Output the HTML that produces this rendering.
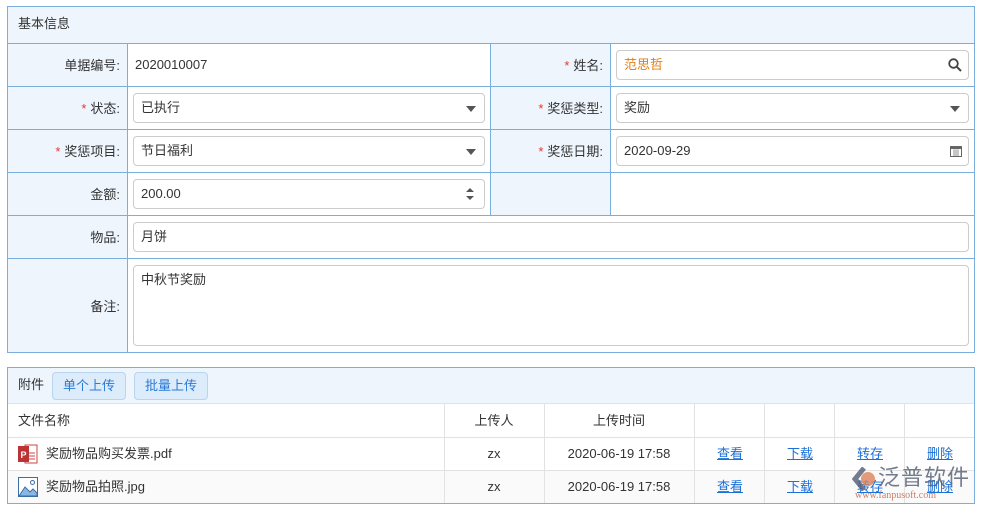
<!DOCTYPE html><html><head><meta charset="utf-8"><style>
body{margin:0;background:#fff;font-family:"Liberation Sans","Noto Sans CJK SC",sans-serif;font-size:13px;color:#333;}
.a{position:absolute;box-sizing:border-box;line-height:16px;}
.ln{position:absolute;background:#7aaedc;}
.lg{position:absolute;background:#e2e2e2;}
.lab{position:absolute;text-align:right;width:112px;line-height:16px;}
.st{color:#e33;margin-right:4px;}
.inp{position:absolute;box-sizing:border-box;border:1px solid #ccc;border-radius:4px;background:#fff;height:30px;padding:0 7px;line-height:28px;}
.tri{position:absolute;right:8px;top:12px;width:0;height:0;border-left:5px solid transparent;border-right:5px solid transparent;border-top:6px solid #555;}
a{color:#1a6fd8;text-decoration:underline;position:absolute;line-height:16px;}
</style></head><body>
<div class="a" style="left:7px;top:6px;width:968px;height:347px;border:1px solid #7aaedc;"></div>
<div class="a" style="left:8px;top:7px;width:966px;height:36px;background:#eef5fd;"></div>
<div class="a" style="left:8px;top:43px;width:119px;height:309px;background:#eef5fd;"></div>
<div class="a" style="left:491px;top:43px;width:119px;height:172px;background:#eef5fd;"></div>
<div class="a" style="left:18px;top:16px;">基本信息</div>
<div class="ln" style="left:7px;top:43px;width:968px;height:1px"></div>
<div class="ln" style="left:7px;top:86px;width:968px;height:1px"></div>
<div class="ln" style="left:7px;top:129px;width:968px;height:1px"></div>
<div class="ln" style="left:7px;top:172px;width:968px;height:1px"></div>
<div class="ln" style="left:7px;top:215px;width:968px;height:1px"></div>
<div class="ln" style="left:7px;top:258px;width:968px;height:1px"></div>
<div class="ln" style="left:127px;top:43px;width:1px;height:310px"></div>
<div class="ln" style="left:490px;top:43px;width:1px;height:172px"></div>
<div class="ln" style="left:610px;top:43px;width:1px;height:172px"></div>

<div class="lab" style="left:8px;top:58px;">单据编号:</div>
<div class="a" style="left:135px;top:57px;">2020010007</div>
<div class="lab" style="left:491px;top:58px;"><span class="st">*</span>姓名:</div>
<div class="inp" style="left:616px;top:50px;width:353px;color:#e0801a;">范思哲<svg style="position:absolute;right:6px;top:7px" width="14" height="14" viewBox="0 0 14 14"><circle cx="5.5" cy="5.5" r="4.3" fill="none" stroke="#444" stroke-width="1.8"/><path d="M8.7 8.7L13 13" stroke="#444" stroke-width="2"/></svg></div>

<div class="lab" style="left:8px;top:101px;"><span class="st">*</span>状态:</div>
<div class="inp" style="left:133px;top:93px;width:352px;">已执行<div class="tri"></div></div>
<div class="lab" style="left:491px;top:101px;"><span class="st">*</span>奖惩类型:</div>
<div class="inp" style="left:616px;top:93px;width:353px;">奖励<div class="tri"></div></div>

<div class="lab" style="left:8px;top:144px;"><span class="st">*</span>奖惩项目:</div>
<div class="inp" style="left:133px;top:136px;width:352px;">节日福利<div class="tri"></div></div>
<div class="lab" style="left:491px;top:144px;"><span class="st">*</span>奖惩日期:</div>
<div class="inp" style="left:616px;top:136px;width:353px;">2020-09-29<svg style="position:absolute;right:6px;top:8px" width="12" height="12" viewBox="0 0 12 12"><rect x="0.5" y="1.5" width="11" height="10" fill="none" stroke="#666"/><rect x="0.5" y="1.5" width="11" height="2.5" fill="#666"/><path d="M3 6h6M3 8h6M3 10h6M4 4v7M6 4v7M8 4v7" stroke="#888" stroke-width=".6"/></svg></div>

<div class="lab" style="left:8px;top:187px;">金额:</div>
<div class="inp" style="left:133px;top:179px;width:352px;">200.00<svg style="position:absolute;right:10px;top:7px" width="8" height="14" viewBox="0 0 8 14"><path d="M0 5L4 1L8 5Z M0 9L4 13L8 9Z" fill="#555"/></svg></div>

<div class="lab" style="left:8px;top:230px;">物品:</div>
<div class="inp" style="left:133px;top:222px;width:836px;">月饼</div>

<div class="lab" style="left:8px;top:299px;">备注:</div>
<div class="inp" style="left:133px;top:265px;width:836px;height:81px;line-height:28px;">中秋节奖励</div>

<div class="a" style="left:7px;top:367px;width:968px;height:137px;border:1px solid #7aaedc;"></div>
<div class="a" style="left:8px;top:368px;width:966px;height:36px;background:#eef5fd;border-bottom:1px solid #e2e2e2;"></div>
<div class="a" style="left:18px;top:377px;">附件</div>
<div class="a" style="left:52px;top:372px;width:74px;height:28px;border:1px solid #b8d4ee;border-radius:4px;background:#dcecfb;color:#2a7ad6;text-align:center;line-height:26px;">单个上传</div>
<div class="a" style="left:134px;top:372px;width:74px;height:28px;border:1px solid #b8d4ee;border-radius:4px;background:#dcecfb;color:#2a7ad6;text-align:center;line-height:26px;">批量上传</div>
<div class="a" style="left:8px;top:471px;width:966px;height:32px;background:#fafafa;"></div>
<div class="lg" style="left:8px;top:437px;width:966px;height:1px"></div>
<div class="lg" style="left:8px;top:470px;width:966px;height:1px"></div>
<div class="lg" style="left:444px;top:404px;width:1px;height:99px"></div>
<div class="lg" style="left:544px;top:404px;width:1px;height:99px"></div>
<div class="lg" style="left:694px;top:404px;width:1px;height:99px"></div>
<div class="lg" style="left:764px;top:404px;width:1px;height:99px"></div>
<div class="lg" style="left:834px;top:404px;width:1px;height:99px"></div>
<div class="lg" style="left:904px;top:404px;width:1px;height:99px"></div>
<div class="a" style="left:18px;top:413px;">文件名称</div>
<div class="a" style="left:444px;top:413px;width:100px;text-align:center;">上传人</div>
<div class="a" style="left:544px;top:413px;width:150px;text-align:center;">上传时间</div>

<svg class="a" style="left:18px;top:444px" width="20" height="20" viewBox="0 0 20 20"><rect x="7" y="1" width="12" height="18" fill="#fff" stroke="#c44" stroke-width="1"/><path d="M10 9h7M10 12h7M10 15h7" stroke="#c44"/><rect x="0" y="2" width="11" height="16" fill="#b33"/><text x="2.5" y="14" font-size="9" fill="#fff" font-family="Liberation Sans" font-weight="bold">P</text></svg>
<div class="a" style="left:46px;top:446px;">奖励物品购买发票.pdf</div>
<svg class="a" style="left:18px;top:477px" width="20" height="20" viewBox="0 0 20 20"><rect x="0.5" y="0.5" width="19" height="19" fill="#fff" stroke="#3a6ea5"/><path d="M1 19L7 10L12 15L15 12L19 16V19Z" fill="#8ab8e6" stroke="#3a6ea5"/><circle cx="14.5" cy="5.5" r="2" fill="none" stroke="#3a6ea5"/></svg>
<div class="a" style="left:46px;top:479px;">奖励物品拍照.jpg</div>
<div class="a" style="left:444px;top:446px;width:100px;text-align:center;">zx</div>
<div class="a" style="left:444px;top:479px;width:100px;text-align:center;">zx</div>
<div class="a" style="left:544px;top:446px;width:150px;text-align:center;">2020-06-19 17:58</div>
<div class="a" style="left:544px;top:479px;width:150px;text-align:center;">2020-06-19 17:58</div>
<a style="left:717px;top:446px">查看</a><a style="left:787px;top:446px">下载</a><a style="left:857px;top:446px">转存</a><a style="left:927px;top:446px">删除</a>
<a style="left:717px;top:479px">查看</a><a style="left:787px;top:479px">下载</a><a style="left:857px;top:479px">转存</a><a style="left:927px;top:479px">删除</a>
<svg class="a" style="left:852px;top:467px" width="26" height="24" viewBox="0 0 26 24"><path d="M12 1L3 12L12 23" fill="none" stroke="rgba(90,100,120,.85)" stroke-width="5"/><circle cx="16" cy="12" r="7" fill="rgba(220,130,90,.8)"/></svg>
<div class="a" style="left:878px;top:466px;font-size:22px;line-height:24px;color:rgba(90,100,120,.85);letter-spacing:1px;">泛普软件</div>
<div class="a" style="left:855px;top:490px;font-size:10px;line-height:11px;color:rgba(200,110,80,.9);font-family:'Liberation Serif',serif;">www.fanpusoft.com</div>
</body></html>
